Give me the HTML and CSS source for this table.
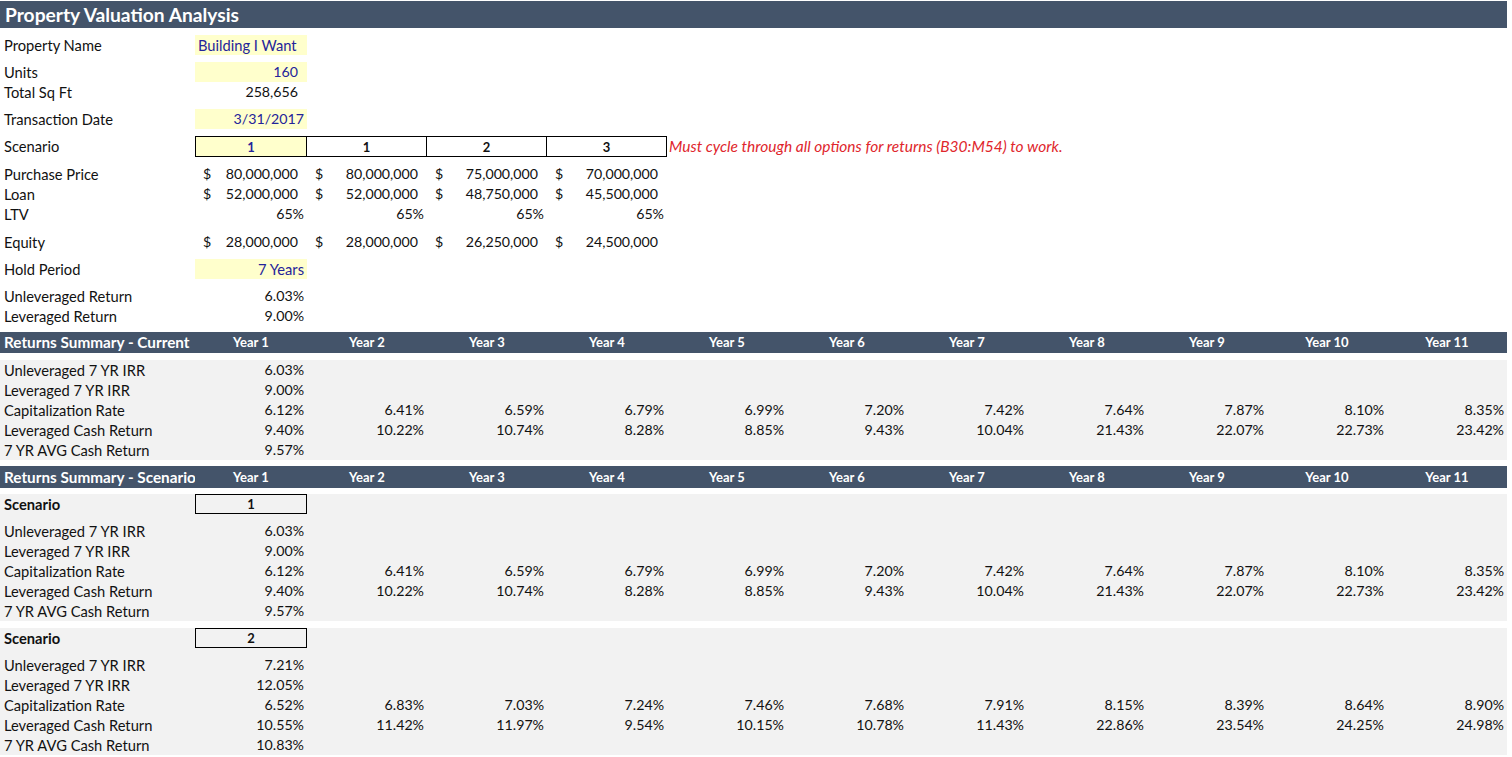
FILE: index.html
```html
<!DOCTYPE html>
<html>
<head>
<meta charset="utf-8">
<link rel="stylesheet" href="styles.css">
<title>Property Valuation Analysis</title>
</head>
<body>
<div class="sheet">
  <div class="title">Property Valuation Analysis</div>
  <div class="g7"></div>
  <div class="row"><div class="lbl">Property Name</div><div class="in left txt">Building I Want</div></div>
  <div class="g7"></div>
  <div class="row"><div class="lbl">Units</div><div class="in num sp">160</div></div>
  <div class="row"><div class="lbl">Total Sq Ft</div><div class="num sp">258,656</div></div>
  <div class="g7"></div>
  <div class="row"><div class="lbl">Transaction Date</div><div class="in num">3/31/2017</div></div>
  <div class="g7"></div>
  <div class="row tall"><div class="lbl">Scenario</div><div class="box first in">1</div><div class="box">1</div><div class="box">2</div><div class="box">3</div><div class="note">Must cycle through all options for returns (B30:M54) to work.</div></div>
  <div class="g7"></div>
  <div class="row"><div class="lbl">Purchase Price</div><div class="money"><span>$</span><span>80,000,000</span></div><div class="money"><span>$</span><span>80,000,000</span></div><div class="money"><span>$</span><span>75,000,000</span></div><div class="money"><span>$</span><span>70,000,000</span></div></div>
  <div class="row"><div class="lbl">Loan</div><div class="money"><span>$</span><span>52,000,000</span></div><div class="money"><span>$</span><span>52,000,000</span></div><div class="money"><span>$</span><span>48,750,000</span></div><div class="money"><span>$</span><span>45,500,000</span></div></div>
  <div class="row"><div class="lbl">LTV</div><div class="num">65%</div><div class="num">65%</div><div class="num">65%</div><div class="num">65%</div></div>
  <div class="g8"></div>
  <div class="row"><div class="lbl">Equity</div><div class="money"><span>$</span><span>28,000,000</span></div><div class="money"><span>$</span><span>28,000,000</span></div><div class="money"><span>$</span><span>26,250,000</span></div><div class="money"><span>$</span><span>24,500,000</span></div></div>
  <div class="g7"></div>
  <div class="row"><div class="lbl">Hold Period</div><div class="in num txt">7 Years</div></div>
  <div class="g7"></div>
  <div class="row"><div class="lbl">Unleveraged Return</div><div class="num">6.03%</div></div>
  <div class="row"><div class="lbl">Leveraged Return</div><div class="num">9.00%</div></div>
  <div class="g6"></div>

  <div class="row hdr h21"><div class="lbl">Returns Summary - Current</div><div class="yr">Year 1</div><div class="yr">Year 2</div><div class="yr">Year 3</div><div class="yr">Year 4</div><div class="yr">Year 5</div><div class="yr">Year 6</div><div class="yr">Year 7</div><div class="yr">Year 8</div><div class="yr">Year 9</div><div class="yr">Year 10</div><div class="yr">Year 11</div></div>
  <div class="g7"></div>
  <div class="panel">
    <div class="row"><div class="lbl">Unleveraged 7 YR IRR</div><div class="num">6.03%</div></div>
    <div class="row"><div class="lbl">Leveraged 7 YR IRR</div><div class="num">9.00%</div></div>
    <div class="row"><div class="lbl">Capitalization Rate</div><div class="num">6.12%</div><div class="num">6.41%</div><div class="num">6.59%</div><div class="num">6.79%</div><div class="num">6.99%</div><div class="num">7.20%</div><div class="num">7.42%</div><div class="num">7.64%</div><div class="num">7.87%</div><div class="num">8.10%</div><div class="num">8.35%</div></div>
    <div class="row"><div class="lbl">Leveraged Cash Return</div><div class="num">9.40%</div><div class="num">10.22%</div><div class="num">10.74%</div><div class="num">8.28%</div><div class="num">8.85%</div><div class="num">9.43%</div><div class="num">10.04%</div><div class="num">21.43%</div><div class="num">22.07%</div><div class="num">22.73%</div><div class="num">23.42%</div></div>
    <div class="row"><div class="lbl">7 YR AVG Cash Return</div><div class="num">9.57%</div></div>
  </div>
  <div class="g6"></div>

  <div class="row hdr h22"><div class="lbl clip">Returns Summary - Scenarios</div><div class="yr">Year 1</div><div class="yr">Year 2</div><div class="yr">Year 3</div><div class="yr">Year 4</div><div class="yr">Year 5</div><div class="yr">Year 6</div><div class="yr">Year 7</div><div class="yr">Year 8</div><div class="yr">Year 9</div><div class="yr">Year 10</div><div class="yr">Year 11</div></div>
  <div class="g6"></div>
  <div class="panel">
    <div class="row"><div class="lbl bold">Scenario</div><div class="box first">1</div></div>
    <div class="g7"></div>
    <div class="row"><div class="lbl">Unleveraged 7 YR IRR</div><div class="num">6.03%</div></div>
    <div class="row"><div class="lbl">Leveraged 7 YR IRR</div><div class="num">9.00%</div></div>
    <div class="row"><div class="lbl">Capitalization Rate</div><div class="num">6.12%</div><div class="num">6.41%</div><div class="num">6.59%</div><div class="num">6.79%</div><div class="num">6.99%</div><div class="num">7.20%</div><div class="num">7.42%</div><div class="num">7.64%</div><div class="num">7.87%</div><div class="num">8.10%</div><div class="num">8.35%</div></div>
    <div class="row"><div class="lbl">Leveraged Cash Return</div><div class="num">9.40%</div><div class="num">10.22%</div><div class="num">10.74%</div><div class="num">8.28%</div><div class="num">8.85%</div><div class="num">9.43%</div><div class="num">10.04%</div><div class="num">21.43%</div><div class="num">22.07%</div><div class="num">22.73%</div><div class="num">23.42%</div></div>
    <div class="row"><div class="lbl">7 YR AVG Cash Return</div><div class="num">9.57%</div></div>
  </div>
  <div class="g7"></div>
  <div class="panel">
    <div class="row"><div class="lbl bold">Scenario</div><div class="box first">2</div></div>
    <div class="g7"></div>
    <div class="row"><div class="lbl">Unleveraged 7 YR IRR</div><div class="num">7.21%</div></div>
    <div class="row"><div class="lbl">Leveraged 7 YR IRR</div><div class="num">12.05%</div></div>
    <div class="row"><div class="lbl">Capitalization Rate</div><div class="num">6.52%</div><div class="num">6.83%</div><div class="num">7.03%</div><div class="num">7.24%</div><div class="num">7.46%</div><div class="num">7.68%</div><div class="num">7.91%</div><div class="num">8.15%</div><div class="num">8.39%</div><div class="num">8.64%</div><div class="num">8.90%</div></div>
    <div class="row"><div class="lbl">Leveraged Cash Return</div><div class="num">10.55%</div><div class="num">11.42%</div><div class="num">11.97%</div><div class="num">9.54%</div><div class="num">10.15%</div><div class="num">10.78%</div><div class="num">11.43%</div><div class="num">22.86%</div><div class="num">23.54%</div><div class="num">24.25%</div><div class="num">24.98%</div></div>
    <div class="row"><div class="lbl">7 YR AVG Cash Return</div><div class="num">10.83%</div></div>
  </div>
</div>
</body>
</html>
```
FILE: styles.css
```css
* { box-sizing: border-box; margin: 0; padding: 0; }
html, body { background: #fff; }
body {
  font-family: Lato, "Open Sans", sans-serif;
  font-size: 14.2px;
  color: #111;
  width: 1512px;
  height: 757px;
  overflow: hidden;
}
.sheet { width: 1507px; padding-top: 1px; }
.title {
  height: 27px;
  background: #44546a;
  color: #fff;
  font-weight: 700;
  font-size: 19.2px;
  line-height: 27px;
  padding-left: 5px;
}
.g6 { height: 6px; }
.g7 { height: 7px; }
.g8 { height: 8px; }
.row {
  display: grid;
  grid-template-columns: 195px 112px repeat(10, 120px);
  height: 20px;
}
.row.tall { height: 21px; }
.row > div {
  height: 100%;
  display: flex;
  align-items: center;
  white-space: nowrap;
  padding-bottom: 1px;
}
.lbl { padding-left: 4px; font-size: 14.7px; }
.txt { font-size: 14.7px; }
.bold { font-weight: 700; }
.num { justify-content: flex-end; padding-right: 3px; }
.num.sp { padding-right: 9px; }
.in { background: #ffffcc; color: #24249a; }
.left { padding-left: 3px; }
.money { justify-content: space-between; padding: 0 9px 0 8px; }
.box {
  justify-content: center;
  font-weight: 700;
  font-size: 13px;
  border-top: 1px solid #000;
  border-bottom: 1px solid #000;
  border-right: 1px solid #000;
}
.box.first { border-left: 1px solid #000; }
.row > .box { padding-bottom: 0; }
.note {
  grid-column: 6 / -1;
  padding-left: 2px;
  color: #e0262c;
  font-style: italic;
  font-size: 15.5px;
}
.hdr { background: #44546a; color: #fff; font-weight: 700; font-size: 13px; }
.hdr .lbl { font-size: 15.3px; }
.hdr.h21 { height: 21px; }
.hdr.h22 { height: 22px; }
.yr { justify-content: center; }
.clip { overflow: hidden; }
.panel { background: #f2f2f2; }
```
